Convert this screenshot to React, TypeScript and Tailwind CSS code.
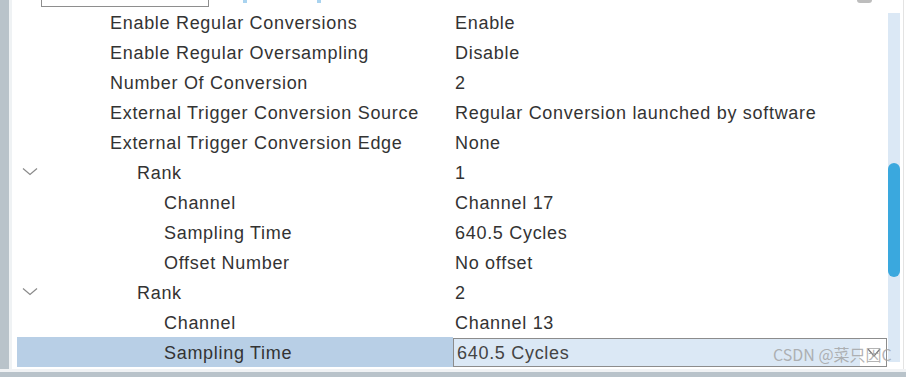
const rows = [
  { label: "Enable Regular Conversions", value: "Enable", level: 0 },
  { label: "Enable Regular Oversampling", value: "Disable", level: 0 },
  { label: "Number Of Conversion", value: "2", level: 0 },
  { label: "External Trigger Conversion Source", value: "Regular Conversion launched by software", level: 0 },
  { label: "External Trigger Conversion Edge", value: "None", level: 0 },
  { label: "Rank", value: "1", level: 1, open: true },
  { label: "Channel", value: "Channel 17", level: 2 },
  { label: "Sampling Time", value: "640.5 Cycles", level: 2 },
  { label: "Offset Number", value: "No offset", level: 2 },
  { label: "Rank", value: "2", level: 1, open: true },
  { label: "Channel", value: "Channel 13", level: 2 },
  { label: "Sampling Time", value: "640.5 Cycles", level: 2, selected: true },
];

const indent = ["pl-[93px]", "pl-[120px]", "pl-[147px]"];

function Chevron() {
  return (
    <svg className="absolute left-[5px] top-[10px] h-[9px] w-[16px]" viewBox="0 0 16 9" fill="none">
      <polyline points="1,1.5 8,7.5 15,1.5" stroke="#8a8a8a" strokeWidth="1.2" />
    </svg>
  );
}

export default function App() {
  return (
    <div className="relative flex h-[377px] w-[906px] flex-col overflow-hidden bg-white font-['Liberation_Sans',Arial,sans-serif] text-[18px] tracking-[0.7px] text-[#333]">
      <div className="flex h-[369px]">
        {/* left gutter */}
        <div className="w-[9px] bg-[#b9c3ca]" />
        <div className="w-[3px] bg-[#eff2f4]" />

        {/* property grid */}
        <div className="flex w-[876px] flex-col">
          {/* cut-off toolbar above */}
          <div className="flex h-[7px] items-end">
            <div className="ml-[29px] h-[7px] w-[168px] border-x border-b border-[#8e8e8e]" />
            <div className="ml-[34px] h-[3px] w-[4px] self-start bg-[#a9d3ef]" />
            <div className="ml-[70px] h-[3px] w-[4px] self-start bg-[#a9d3ef]" />
            <div className="ml-[536px] h-[3px] w-[15px] self-start rounded-b-full bg-[#bdbdbd]" />
          </div>

          <div className="ml-[5px] flex flex-col">
            {rows.map((row, i) => (
              <div key={i} className="flex h-[30px] items-center">
                <div
                  className={`relative flex h-full w-[436px] items-center pt-[2px] ${indent[row.level]} ${
                    row.selected ? "bg-[#b8cfe6]" : ""
                  }`}
                >
                  {row.open && <Chevron />}
                  <span>{row.label}</span>
                </div>
                {row.selected ? (
                  <div className="flex h-[29px] w-[434px] border border-[#8c8c8c] bg-white">
                    <div className="flex flex-1 items-center bg-[#dbe8f5] pl-[3px] pt-[2px] text-[#444]">{row.value}</div>
                    <div className="relative w-[26px]">
                      <svg className="absolute left-[7px] top-[9px] h-[10px] w-[14px]" viewBox="0 0 14 10" fill="none">
                        <polyline points="1,1 7,8 13,1" stroke="#7a7a7a" strokeWidth="1.2" />
                      </svg>
                    </div>
                  </div>
                ) : (
                  <div className="pl-[2px] pt-[2px]">{row.value}</div>
                )}
              </div>
            ))}
          </div>
        </div>

        {/* scrollbar */}
        <div className="flex w-[12px] flex-col pb-[7px] pt-[13px]">
          <div className="flex flex-1 flex-col bg-[#dbe8f5] pt-[150px]">
            <div className="h-[114px] w-[12px] rounded-full bg-[#3aa8de]" />
          </div>
        </div>
        <div className="w-[3px]" />
        <div className="w-px bg-[#e3e3e3]" />
        <div className="w-[2px]" />
      </div>
      <div className="h-[3px] bg-[#f0f2f4]" />
      <div className="flex-1 bg-[#b9c3ca]" />

      {/* watermark */}
      <div className="pointer-events-none absolute left-[773px] top-[342px] font-['Noto_Sans_CJK_SC',sans-serif] text-[16px] tracking-normal text-[#a0a0a0]/80">
        CSDN @菜只因C
      </div>
    </div>
  );
}
